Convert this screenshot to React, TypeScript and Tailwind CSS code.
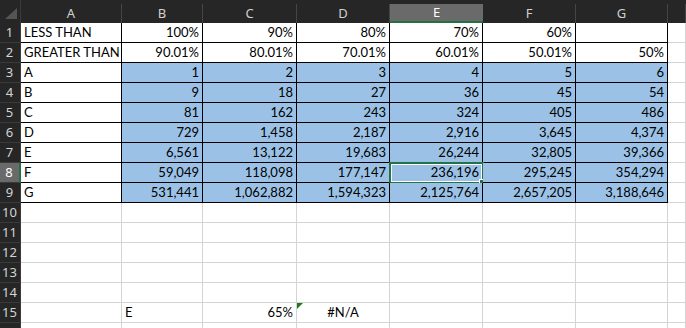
import React from 'react';

const cols = ['A', 'B', 'C', 'D', 'E', 'F', 'G', ''];

type Cell = { v: string; align?: 'l' | 'r' | 'c' };

const rows: Cell[][] = [
    [{ v: 'LESS THAN' }, { v: '100%', align: 'r' }, { v: '90%', align: 'r' }, { v: '80%', align: 'r' }, { v: '70%', align: 'r' }, { v: '60%', align: 'r' }, { v: '' }],
    [{ v: 'GREATER THAN' }, { v: '90.01%', align: 'r' }, { v: '80.01%', align: 'r' }, { v: '70.01%', align: 'r' }, { v: '60.01%', align: 'r' }, { v: '50.01%', align: 'r' }, { v: '50%', align: 'r' }],
];

const table: [string, string[]][] = [
    ['A', ['1', '2', '3', '4', '5', '6']],
    ['B', ['9', '18', '27', '36', '45', '54']],
    ['C', ['81', '162', '243', '324', '405', '486']],
    ['D', ['729', '1,458', '2,187', '2,916', '3,645', '4,374']],
    ['E', ['6,561', '13,122', '19,683', '26,244', '32,805', '39,366']],
    ['F', ['59,049', '118,098', '177,147', '236,196', '295,245', '354,294']],
    ['G', ['531,441', '1,062,882', '1,594,323', '2,125,764', '2,657,205', '3,188,646']],
];

export default function App() {
    const grid: Cell[][] = [];
    rows.forEach(r => grid.push([...r, { v: '' }]));
    table.forEach(([label, nums]) => grid.push([{ v: label }, ...nums.map(n => ({ v: n, align: 'r' as const })), { v: '' }]));
    for (let i = 10; i <= 16; i++) {
        const empty: Cell[] = Array.from({ length: 8 }, () => ({ v: '' }));
        if (i === 15) {
            empty[1] = { v: 'E' };
            empty[2] = { v: '65%', align: 'r' };
            empty[3] = { v: '#N/A', align: 'c' };
        }
        grid.push(empty);
    }

    return (
        <div className="w-[686px] h-[328px] overflow-hidden bg-white">
            <div className="grid grid-cols-[21px_101px_81px_94px_93px_93px_93px_92px_1fr] grid-rows-[23px_repeat(16,20px)]">
                {/* corner */}
                <div className="bg-[#262626] relative border-r border-[#3a3a3a]">
                    <div className="absolute left-[5px] top-[8px] w-0 h-0 border-l-[12px] border-l-transparent border-b-[11px] border-b-[#555555]" />
                </div>
                {cols.map((c, i) => {
                    const sel = c === 'E';
                    return (
                        <div key={'h' + i} className="bg-[#262626] pt-[4px]">
                            <div
                                className={
                                    sel
                                        ? "h-full flex items-center justify-center bg-[#6a6a6a] border-b-2 border-[#217346] text-white text-[13px] font-['Noto_Sans',sans-serif]"
                                        : "h-full flex items-center justify-center border-r border-[#454545] text-[#d0d0d0] text-[13px] font-['Noto_Sans',sans-serif]"
                                }
                            >
                                {c}
                            </div>
                        </div>
                    );
                })}
                {grid.map((row, ri) => {
                    const rn = ri + 1;
                    const rowSel = rn === 8;
                    return (
                        <React.Fragment key={'r' + ri}>
                            <div
                                className={
                                    rowSel
                                        ? "bg-[#6a6a6a] border-r-2 border-r-[#217346] border-b border-b-[#3a3a3a] flex items-center justify-center pr-[1px] text-white text-[13px] font-['Noto_Sans',sans-serif]"
                                        : "bg-[#262626] border-r border-r-[#3a3a3a] border-b border-b-[#3a3a3a] flex items-center justify-center pr-[1px] text-[#d4d4d4] text-[13px] font-['Noto_Sans',sans-serif]"
                                }
                            >
                                {rn < 16 ? rn : ''}
                            </div>
                            {row.map((cell, ci) => {
                                const inRange = rn <= 9 && ci <= 6;
                                const blue = rn >= 3 && rn <= 9 && ci >= 1 && ci <= 6;
                                const isSel = rn === 8 && ci === 4;
                                const tri = rn === 15 && ci === 3;
                                return (
                                    <div
                                        key={ci}
                                        className={[
                                            "relative flex items-center px-[3px] pt-[1px] whitespace-nowrap text-black text-[13px] font-['Lato',sans-serif] border-r border-b",
                                            inRange ? 'border-black' : 'border-[#d4d4d4]',
                                            blue ? 'bg-[#9bc2e6]' : 'bg-white',
                                            cell.align === 'r' ? 'justify-end' : cell.align === 'c' ? 'justify-center' : 'justify-start',
                                        ].join(' ')}
                                    >
                                        {cell.v}
                                        {tri && (
                                            <div className="absolute left-0 top-0 w-0 h-0 border-t-[6px] border-t-[#1f7a1f] border-r-[6px] border-r-transparent" />
                                        )}
                                        {isSel && (
                                            <>
                                                <div className="absolute -left-[1px] -top-[1px] w-[95px] h-[22px] border-2 border-[#217346] shadow-[inset_0_0_0_1px_#ffffff]" />
                                                <div className="absolute -right-[3px] -bottom-[3px] w-[6px] h-[6px] bg-[#217346] border border-white" />
                                            </>
                                        )}
                                    </div>
                                );
                            })}
                        </React.Fragment>
                    );
                })}
            </div>
        </div>
    );
}
